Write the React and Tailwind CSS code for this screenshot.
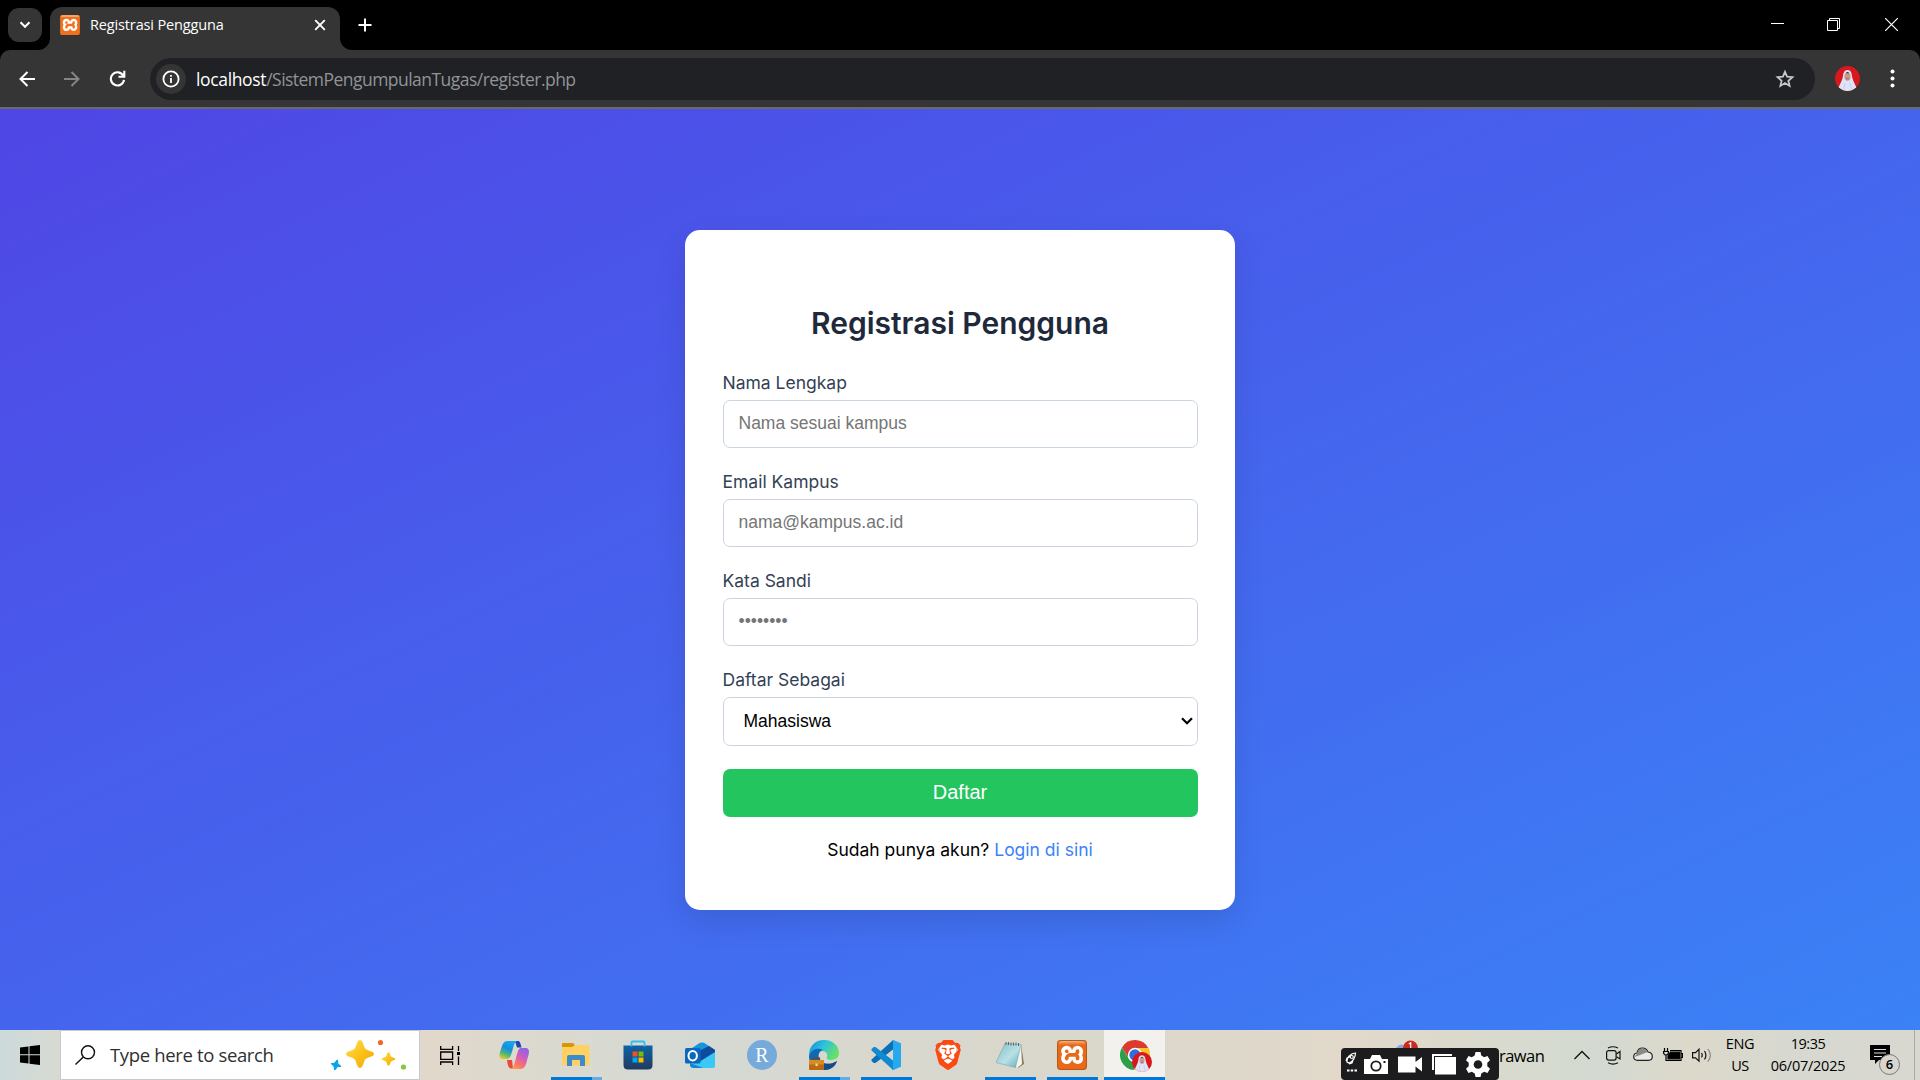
import React from "react";
import { SiBrave, SiXampp } from "react-icons/si";

const FIELD = "h-12 w-full rounded-[7px] border border-[#cbd5e1] bg-white px-[15px] text-[17.5px] leading-none placeholder:text-[#757575] placeholder:opacity-100 outline-none font-['Liberation_Sans',sans-serif]";

function Avatar({ size }) {
  return (
    <svg width={size} height={size} viewBox="0 0 25 25">
      <defs><clipPath id={"av" + size}><circle cx="12.5" cy="12.5" r="12.5" /></clipPath></defs>
      <g clipPath={`url(#av${size})`}>
        <rect width="25" height="25" fill="#d8181d" />
        <path d="M12.5 4C8.8 4 8.3 7.500 7.800 11C7.300 15 3.500 20 2.500 25H22.500C21.500 20 17.700 15 17.200 11C16.700 7.500 16.200 4 12.500 4Z" fill="#dfe3f7" />
        <ellipse cx="12.500" cy="10.600" rx="3.100" ry="4.200" fill="#c79a8c" />
        <path d="M11 6.800Q12.500 5.300 14 6.800V7.300H11Z" fill="#3a2d35" />
        <path d="M11.200 12.700H13.800" stroke="#9e5454" strokeWidth=".8" />
        <path d="M10 17L8.500 25M15 17L17 25" stroke="#b9c0df" strokeWidth=".6" />
      </g>
    </svg>
  );
}

function Xampp({ size }) {
  return (
    <span className={size > 20 ? "relative block h-[30px] w-[30px] rounded-[4px] bg-[linear-gradient(white,white)] bg-[length:80%_80%] bg-center bg-no-repeat after:absolute after:inset-0 after:rounded-[4px] after:border after:border-[#b5581c] after:bg-[linear-gradient(#f3b083,transparent_4px)]" : "relative block h-5 w-5 bg-[linear-gradient(white,white)] bg-[length:80%_80%] bg-center bg-no-repeat after:absolute after:inset-x-px after:top-0 after:h-[2px] after:rounded-t-[2px] after:bg-[#f3a36c]"}>
      <SiXampp size={size} color={size > 20 ? "#e8691a" : "#f0701d"} />
    </span>
  );
}

function BrowserChrome() {
  return (
    <header className="shrink-0 bg-black font-['Open_Sans','Noto_Sans',sans-serif]">
      <div className="flex h-[50px] items-start">
        <button className="ml-2 mt-2 grid h-[34px] w-[34px] place-items-center rounded-[11px] bg-[#353535]">
          <svg width="12" height="8" viewBox="0 0 12 8" fill="none" stroke="#fff" strokeWidth="2"><path d="M1.500 1.300L6 5.800L10.500 1.300" /></svg>
        </button>
        <div className="relative ml-2 mt-[7px] flex h-[43px] w-[290px] items-start rounded-t-[12px] bg-[#353535]">
          <svg className="absolute -left-3 bottom-0" width="12" height="12"><path d="M12 0V12H0A12 12 0 0 0 12 0Z" fill="#353535" /></svg>
          <svg className="absolute -right-3 bottom-0" width="12" height="12"><path d="M0 0V12H12A12 12 0 0 1 0 0Z" fill="#353535" /></svg>
          <span className="ml-[10px] mt-2"><Xampp size={20} /></span>
          <span className="ml-[10px] mt-[7px] w-[224px] shrink-0 text-[14.5px] leading-[22px] tracking-[-0.14px] text-white">Registrasi Pengguna</span>
          <svg className="mt-[12px] shrink-0" width="12" height="12" viewBox="0 0 12 12" stroke="#fff" strokeWidth="1.900"><path d="M1.200 1.200L10.800 10.800M10.800 1.200L1.200 10.800" /></svg>
        </div>
        <svg className="ml-[18px] mt-[18px]" width="14" height="14" viewBox="0 0 14 14" stroke="#fff" strokeWidth="2"><path d="M7 .5V13.500M.5 7H13.500" /></svg>
        <div className="ml-auto mt-[18px] flex">
          <svg className="mr-[43px]" width="13" height="13"><path d="M0 5.500H13" stroke="#fff" /></svg>
          <svg className="mr-[45px]" width="13" height="13" viewBox="0 0 13 13" fill="none" stroke="#fff"><path d="M.5 2.500H10.500V12.500H.5ZM2.500 2.500V.5H12.500V10.500H10.500" /></svg>
          <svg className="mr-[22px]" width="13" height="13" stroke="#fff" strokeWidth="1.200"><path d="M0 0L13 13M13 0L0 13" /></svg>
        </div>
      </div>
      <div className="flex h-[57px] items-start rounded-t-[10px] bg-[#353535]">
        <svg className="ml-[19px] mt-[21px]" width="16" height="16" viewBox="0 0 16 16" fill="none" stroke="#fff" strokeWidth="2"><path d="M16 8H2M8.500 1L1.500 8L8.500 15" /></svg>
        <svg className="ml-[29px] mt-[21px]" width="16" height="16" viewBox="0 0 16 16" fill="none" stroke="#858585" strokeWidth="2"><path d="M0 8H14M7.500 1L14.500 8L7.500 15" /></svg>
        <svg className="ml-[29px] mt-[20px]" width="17" height="17" viewBox="0 0 17 17" fill="none" stroke="#fff" strokeWidth="2.100"><path d="M14.300 5.800A6.600 6.600 0 1 0 15 9.800M15.300 .8V6.700H9.500" /></svg>
        <div className="ml-6 mt-2 flex h-[42px] w-[1665px] items-center rounded-full bg-[#202124]">
          <span className="ml-[6px] grid h-[30px] w-[30px] place-items-center rounded-full bg-[#353535]">
            <svg width="18" height="18" viewBox="0 0 18 18" fill="none" stroke="#fff" strokeWidth="1.800"><circle cx="9" cy="9" r="7.600" /><path d="M9 8V13M9 5V6.700" /></svg>
          </span>
          <span className="ml-[10px] text-[17.5px] tracking-[-0.53px] text-[#919497]"><span className="tracking-[-0.35px] text-white">localhost</span>/SistemPengumpulanTugas/register.php</span>
          <svg className="ml-auto mr-5" width="20" height="20" viewBox="0 0 20 20" fill="none" stroke="#c7c7c7" strokeWidth="1.800"><path d="M10 2.800L12.100 7.700L17.400 8.200L13.400 11.700L14.600 16.900L10 14.100L5.400 16.900L6.600 11.700L2.600 8.200L7.900 7.700Z" /></svg>
        </div>
        <span className="ml-5 mt-4"><Avatar size={25} /></span>
        <svg className="ml-[30px] mt-[19px]" width="5" height="19" fill="#fff"><circle cx="2.500" cy="2.500" r="2" /><circle cx="2.500" cy="9.500" r="2" /><circle cx="2.500" cy="16.500" r="2" /></svg>
      </div>
      <div className="h-[2px] bg-[#6a6a6a]" />
    </header>
  );
}

function Field({ label, children }) {
  return (
    <label className="mb-[23px] block">
      <span className="mb-1 block h-[24px] text-[17.5px] leading-[22px] text-[#334155]">{label}</span>
      {children}
    </label>
  );
}

function RegisterCard() {
  return (
    <main className="flex flex-1 items-center justify-center bg-linear-to-br/srgb from-[#4f46e5] to-[#3b82f6] font-['Inter',sans-serif]">
      <form className="h-[680px] w-[550px] rounded-[15px] bg-white pl-[37.5px] pr-[37.5px] pt-[73px] shadow-[0_12px_31px_rgba(0,0,0,0.1)]">
        <h2 className="mb-[28px] text-center text-[30px] leading-[41px] font-semibold text-[#1e293b]">Registrasi Pengguna</h2>
        <Field label="Nama Lengkap"><input className={FIELD} placeholder="Nama sesuai kampus" /></Field>
        <Field label="Email Kampus"><input className={FIELD} placeholder="nama@kampus.ac.id" /></Field>
        <Field label="Kata Sandi"><input className={FIELD} type="text" placeholder="••••••••" /></Field>
        <Field label="Daftar Sebagai">
          <span className="flex h-[49px] items-center justify-between rounded-[7px] border border-[#cbd5e1] bg-white pl-5 pr-1 font-['Liberation_Sans',sans-serif] text-[17.5px] text-black">
            Mahasiswa
            <svg width="12" height="8" viewBox="0 0 12 8" fill="none" stroke="#000" strokeWidth="2.200"><path d="M1 1.200L6 6.200L11 1.200" /></svg>
          </span>
        </Field>
        <button type="button" className="h-12 w-full rounded-[7px] bg-[#22c55e] pb-[2px] font-['Liberation_Sans',sans-serif] text-[20px] text-white">Daftar</button>
        <p className="mt-[20px] text-center text-[17.5px] leading-[26px] text-black">Sudah punya akun? <a className="text-[#3b82f6]">Login di sini</a></p>
      </form>
    </main>
  );
}

function AppCell({ children, state }) {
  return (
    <span className={state === "active" ? "ml-px flex h-[50px] w-[61px] shrink-0 flex-col items-center bg-[#f2f1ed]" : "flex h-[50px] w-[62px] shrink-0 flex-col items-center"}>
      <span className="grid h-[47px] place-items-center pt-[3px]">{children}</span>
      {state === "open" && <span className="h-[3px] w-[51px] bg-[#0078d7]" />}
      {state === "multi" && <span className="flex h-[3px] w-[51px]"><i className="w-[41px] bg-[#0078d7]" /><i className="w-[10px] bg-[#66abe3]" /></span>}
      {state === "active" && <span className="h-[3px] w-full bg-[#0078d7]" />}
    </span>
  );
}

const Star = ({ x, y, s, fill, r = 0 }) => (
  <path transform={`translate(${x} ${y}) rotate(${r}) scale(${s})`} fill={fill} d="M0-14C2.200-14 3-11 4.200-7.500C5-5 6-4.500 8.500-3.500C12-2.200 14-1.800 14 0C14 1.800 12 2.200 8.500 3.500C6 4.500 5 5 4.200 7.500C3 11 2.200 14 0 14C-2.200 14-3 11-4.200 7.500C-5 5-6 4.500-8.500 3.500C-12 2.200-14 1.800-14 0C-14-1.800-12-2.200-8.500-3.500C-6-4.500-5-5-4.200-7.500C-3-11-2.200-14 0-14Z" />
);

function Taskbar() {
  return (
    <footer className="flex h-[50px] shrink-0 overflow-hidden bg-[linear-gradient(90deg,#ccdada_0px,#d8dad2_60px,#e1d8cb_430px,#d9dad1_590px,#d4d9d3_700px,#d8d8cf_840px,#dad7cb_1100px,#e2d9ca_1350px,#d6dacf_1540px,#d3d9d1_1600px,#ddd9cb_1690px,#d7d8cf_1780px,#d8d8d0_1920px)] font-['Open_Sans','Noto_Sans',sans-serif] text-black">
      <span className="grid w-[60px] shrink-0 place-items-center">
        <svg width="20" height="20" viewBox="0 0 20 20"><path d="M0 2.500L8.500 1.400V9.300H0ZM9.500 1.200L20 0V9.300H9.500ZM0 10.300H8.500V18.600L0 17.400ZM9.500 10.300H20V20L9.500 18.700Z" /></svg>
      </span>
      <div className="flex h-[50px] w-[360px] shrink-0 items-start border border-[#c9c9c9] bg-white">
        <svg className="ml-[14px] mt-[14px] shrink-0" width="21" height="20" viewBox="0 0 21 20" fill="none" stroke="#111" strokeWidth="1.400"><circle cx="13" cy="7.300" r="6.500" /><path d="M8.300 12L.5 19.500" /></svg>
        <span className="ml-[14px] mt-[11px] w-[217px] shrink-0 whitespace-nowrap text-[18.5px] leading-[26px] tracking-[-0.35px] text-[#303030]">Type here to search</span>
        <svg width="80" height="34" viewBox="0 0 80 34" className="mt-[7px] shrink-0">
          <defs><linearGradient id="gold" x2="1" y2="1"><stop stopColor="#ffe052" /><stop offset=".55" stopColor="#fbbf16" /><stop offset="1" stopColor="#eda514" /></linearGradient></defs>
          <Star x={33} y={16} s={1} fill="url(#gold)" /><Star x={61.500} y={21} s={0.480} fill="url(#gold)" /><Star x={9} y={27} s={0.380} fill="#0ca4e8" r={15} />
          <circle cx="53.500" cy="4.500" r="2.600" fill="#f0662b" /><circle cx="76.500" cy="29" r="2.600" fill="#87c540" />
        </svg>
      </div>
      <span className="grid w-[63px] shrink-0 place-items-center pr-[3px]">
        <svg width="20" height="19" viewBox="0 0 20 19" fill="none" stroke="#000" strokeWidth="1.300"><path d="M.7 0V3.300H12.600V0M.7 19V16H12.600V19M.7 6H12.600V13.300H.7ZM18.500 0V5M18.500 10.500V19" /><path d="M17 6H20V9H17Z" fill="#000" stroke="none" /></svg>
      </span>
      <AppCell>
        <svg width="30" height="28" viewBox="0 0 30 28">
          <defs>
            <linearGradient id="c1" x1=".6" x2=".2" y2="1"><stop stopColor="#18a8ef" /><stop offset=".4" stopColor="#148ee0" /><stop offset=".7" stopColor="#4bb57a" /><stop offset="1" stopColor="#e4cf28" /></linearGradient>
            <linearGradient id="c2" x1=".7" x2=".2" y2="1"><stop stopColor="#8f62e8" /><stop offset=".45" stopColor="#d85fb1" /><stop offset=".75" stopColor="#fb7468" /><stop offset="1" stopColor="#f9a14b" /></linearGradient>
          </defs>
          <path d="M16 0H19C21 0 21.500 2.500 22.500 6.500H18Z" fill="#1846b5" />
          <path d="M9 0H18C15.500 1 15 4 13.500 9C12 14.500 11 18 8 18H3.500C0 18 0 15 1 11L3 5C4.500 1 6 0 9 0Z" fill="url(#c1)" />
          <path d="M8 19H13L14 27.500H12C9.500 27.500 8.500 23.500 8 19Z" fill="#e84b36" />
          <path d="M21 28H12C14.500 27 15 24 16.500 19C18 13.500 19 7 22 7H26.500C30 7 30.500 10 29.500 14L27 23C25.500 27 24 28 21 28Z" fill="url(#c2)" />
        </svg>
      </AppCell>
      <AppCell state="multi">
        <svg width="28" height="24" viewBox="0 0 28 24"><path d="M0 1Q0 0 1 0H11L13.500 2.500L11 5H0Z" fill="#dc9500" /><path d="M0 4H10L13 2H26Q27.500 2 27.500 3.500V21Q27.500 22.500 26 22.500H1.500Q0 22.500 0 21Z" fill="#ffd163" /><path d="M5 23V14Q5 12 7 12H21Q23 12 23 14V23H18V17H10V23Z" fill="#3c8ccb" /></svg>
      </AppCell>
      <AppCell>
        <svg width="30" height="30" viewBox="0 0 30 30"><defs><linearGradient id="st" x2="0" y2="1"><stop stopColor="#0d62a9" /><stop offset="1" stopColor="#223a5f" /></linearGradient></defs><path d="M.5 5.500H29.500V25Q29.500 29.500 25 29.500H5Q.5 29.500 .5 25Z" fill="url(#st)" /><path d="M8.500 6.500V2.500Q8.500 1.500 9.500 1.500H20.500Q21.500 1.500 21.500 2.500V6.500" fill="none" stroke="#31bdf0" strokeWidth="1.800" /><path d="M9.500 11.500H14.500V16.500H9.500Z" fill="#f25022" /><path d="M15.500 11.500H20.500V16.500H15.500Z" fill="#7fba00" /><path d="M9.500 17.500H14.500V22.500H9.500Z" fill="#00a4ef" /><path d="M15.500 17.500H20.500V22.500H15.500Z" fill="#ffb900" /></svg>
      </AppCell>
      <AppCell>
        <svg width="30" height="27" viewBox="0 0 30 27"><path d="M4 8L15 .8Q17 0 19 .8L30 8V16H4Z" fill="#1895da" /><path d="M8 12L24 4L30 8V12L15 21Z" fill="#104a9c" /><path d="M14 20L30 10V24Q30 26 28 26H9Q6 26 5 22Z" fill="#3bc8f4" /><path d="M5 21L18 26H9Q5 26 5 23Z" fill="#1683ce" /><rect y="6" width="15.500" height="15.500" rx="1.500" fill="#0868bd" /><ellipse cx="7.700" cy="13.700" rx="4.200" ry="4.700" fill="none" stroke="#fff" strokeWidth="2" /></svg>
      </AppCell>
      <AppCell>
        <span className="grid h-[30px] w-[30px] place-items-center rounded-full bg-[#75aadb] font-['Liberation_Serif',serif] text-[20px] leading-[28px] text-white">R</span>
      </AppCell>
      <AppCell state="multi">
        <svg width="30" height="30" viewBox="0 0 30 30"><defs><linearGradient id="ed" x2="1" y2=".5"><stop stopColor="#1687d9" /><stop offset=".5" stopColor="#2cc3dc" /><stop offset="1" stopColor="#67df68" /></linearGradient></defs><path d="M0 15C0 6 6.500 0 15 0C24 0 30 6 30 13C30 18 26 20 22 20C18.500 20 17 18.500 18 16.500C19 14 17 11 13 11C8 11 4 14 0 19Z" fill="url(#ed)" /><path d="M0 16C2 9 9 7 14 10C10 11 9 15 10 18C12 24 20 26 28 21C26 27 21 30 15 30C6 30 0 24 0 16Z" fill="#1268b2" /><path d="M10 18C12 24 20 26 28 21C26 27 21 30 15 30V23C12 22 10 20 10 18Z" fill="#144d86" /><rect x="0" y="20" width="15" height="10" rx="1" fill="#b86a14" /><path d="M0 20H15V24.500H0Z" fill="#d88b25" /><path d="M4.500 20V18H10.500V20" fill="none" stroke="#78400c" strokeWidth="1.200" /><rect x="6.500" y="23.500" width="2.200" height="2.600" fill="#ffd978" /></svg>
      </AppCell>
      <AppCell state="open">
        <svg width="30" height="30" viewBox="0 0 30 30"><path d="M22 0L30 3.500V26.500L22 30L20.500 28.500L22 22Z" fill="#26a5ee" /><path d="M22 0L20.500 1.500L.5 19.500V21L2.800 23L4.500 23L22 9.500Z" fill="#0a70b8" /><path d="M22 30L20.500 28.500L.5 10.500V9L2.800 7L4.500 7L22 20.500Z" fill="#128ad2" /><path d="M22 0L30 3.500V26.500L22 30Z" fill="#27a9f2" /></svg>
      </AppCell>
      <AppCell>
        <span className="block bg-[linear-gradient(white,white)] bg-[length:16px_20px] bg-center bg-no-repeat"><SiBrave size={30} color="#fb4b13" /></span>
      </AppCell>
      <AppCell state="open">
        <svg width="29" height="27" viewBox="0 0 29 27"><defs><linearGradient id="np" x2="1" y2="1"><stop stopColor="#7fbdc8" /><stop offset=".55" stopColor="#b9e1e6" /><stop offset="1" stopColor="#5aabb9" /></linearGradient></defs><path d="M25 2L28 22L22 26L19 22Z" fill="#8d7a57" /><path d="M25 2L26 22L21 26L18 22Z" fill="#f2f4f3" /><path d="M9 1.500L25 2.500L19.500 25.500L0 20.500Z" fill="url(#np)" stroke="#6c9ba5" strokeWidth=".5" /><path d="M10 0V3M12.500 0V3M15 .5V3.500M17.500 .5V3.500M20 .5V3.500M22.500 1V4" stroke="#59686b" /></svg>
      </AppCell>
      <AppCell state="open"><Xampp size={30} /></AppCell>
      <AppCell state="active">
        <span className="relative block h-[30px] w-[30px]">
          <svg width="30" height="30" viewBox="0 0 30 30"><path d="M2 7.500A15 15 0 0 1 28.500 8.500H15A7 7 0 0 0 9 18.500Z" fill="#dc3a2d" /><path d="M2 7.500L8.700 18.500A7 7 0 0 0 17 21.500L14 30A15 15 0 0 1 2 7.500Z" fill="#2e9e49" /><path d="M28.500 8A15 15 0 0 1 14 30L21 18.500Q23.500 13 18 8Z" fill="#f8c62c" /><circle cx="15" cy="15" r="7.200" fill="#fff" /><circle cx="15" cy="15" r="5.700" fill="#2e6fe0" /></svg>
          <span className="absolute left-3 top-3"><Avatar size={20} /></span>
        </span>
      </AppCell>

      <div className="relative ml-[176px] mt-[18px] flex h-8 w-[158px] shrink-0 items-start rounded-[4px] bg-[#1c1c1e]">
        <svg className="absolute left-[54px] -top-[8px]" width="24" height="8" viewBox="0 0 24 8"><path d="M1 8Q6 1 12 8Z" fill="#82a9e0" /><path d="M8 8A7.500 7.500 0 1 1 23 8Z" fill="#cb2a21" /><path d="M13.800 4L15.700 2.800V8" stroke="#fff" strokeWidth="1.200" fill="none" /></svg>
        <svg className="ml-1 mt-1" width="13" height="22" viewBox="0 0 13 22" fill="none" stroke="#fff" strokeWidth="1.200"><path d="M2 10C1 6 6 1 10.500 1C10.500 5 8 10 4 11ZM5 5L2 6L1 9M8 8L7 11L4 12" /><circle cx="6.800" cy="5" r="1.500" /><path d="M2 18.500H4.500M5.700 18.500H8.200M9.500 18.500H12" strokeWidth="2.200" /></svg>
        <svg className="ml-[6px] mt-[7px]" width="24" height="20" viewBox="0 0 24 20"><path d="M0 4H6L8 0H16L18 4H24V19H0Z" fill="#fff" /><circle cx="12" cy="11" r="4.700" fill="#fff" stroke="#1c1c1e" strokeWidth="1.800" /><path d="M19.500 6H21.500V8H19.500Z" fill="#1c1c1e" /></svg>
        <svg className="ml-[10px] mt-2" width="24" height="17" viewBox="0 0 24 17" fill="#fff"><path d="M0 .5H17.500V6L24 1V15.500L17.500 10.500V16.500H0Z" /></svg>
        <svg className="ml-[10px] mt-[6px]" width="24" height="21" viewBox="0 0 24 21" fill="#fff"><path d="M0 0H20V2H2V16H0ZM3 3H24V20.500H3Z" /></svg>
        <svg className="ml-[10px] mt-1" width="24" height="25" viewBox="0 0 24 25"><path d="M9.500 0H14.500L15.300 3.500L18.200 5.200L21.500 4L24 8.300L21.300 10.800V14.200L24 16.700L21.500 21L18.200 19.800L15.300 21.500L14.500 25H9.500L8.700 21.500L5.800 19.800L2.500 21L0 16.700L2.700 14.200V10.800L0 8.300L2.500 4L5.800 5.200L8.700 3.500Z" fill="#fff" /><circle cx="12" cy="12.500" r="4.300" fill="#1c1c1e" /></svg>
      </div>
      <span className="mt-[14px] w-[75px] shrink-0 text-[16.5px] leading-[24px] tracking-[-0.55px]">rawan</span>
      <svg className="mt-5 shrink-0" width="16" height="10" viewBox="0 0 16 10" fill="none" stroke="#111" strokeWidth="1.300"><path d="M.5 9L8 1.500L15.500 9" /></svg>
      <svg className="ml-4 mt-4 shrink-0" width="15" height="19" viewBox="0 0 15 19" fill="none" stroke="#111" strokeWidth="1.200"><rect x=".6" y="4.600" width="9.500" height="9.500" rx="2" /><path d="M10.500 8L14 5.500V13L10.500 10.700M2 2Q7 -.5 12 2M2 16.800Q7 19.300 12 16.800" /></svg>
      <svg className="ml-3 mt-[17px] shrink-0" width="20" height="14" viewBox="0 0 20 14"><path d="M4.500 13.300Q.7 13.300 .7 9.700Q.7 6.500 4 6Q5 1 9.500 1Q13.500 1 15 5Q19.300 5.500 19.300 9.500Q19.300 13.300 15.500 13.300Z" fill="#e9e9e7" stroke="#222" strokeWidth="1.200" /><path d="M1.500 10L4 6.500Q5 1.500 9.500 1.500Q13 1.500 14.500 5L8.500 7.500Z" fill="#8a8b88" /></svg>
      <svg className="ml-[10px] mt-[18px] shrink-0" width="20" height="14" viewBox="0 0 20 14" fill="none" stroke="#000" strokeWidth="1.200"><path d="M1.500 0V3M4.500 0V3M.5 3.500H5.500Q5.500 7 3 7Q.5 7 .5 3.500ZM3 7V12.500H18V2.500H7M18.500 5.500H19.500V9.500H18.500" /><path d="M7.500 4.200H16.500V10.800H5V8Z" fill="#000" /></svg>
      <svg className="ml-[9px] mt-[18px] shrink-0" width="20" height="15" viewBox="0 0 20 15" fill="none" stroke="#111" strokeWidth="1.200"><path d="M.6 4.600H3.500L7 1.200V13.200L3.500 9.800H.6ZM9.500 5Q11 7.200 9.500 9.400M12.500 3Q15.300 7.200 12.500 11.400" /><path d="M15.800 .8Q21 7.200 15.800 13.600" stroke="#8d8d88" /></svg>
      <div className="ml-[10px] mt-[3px] w-[36px] shrink-0 text-center text-[14.5px] leading-[22px] tracking-[-0.4px]"><div>ENG</div><div>US</div></div>
      <div className="ml-[7px] mt-[3px] w-[86px] shrink-0 text-center text-[14.5px] leading-[22px] tracking-[-0.25px]"><div className="tracking-[-0.5px]">19:35</div><div>06/07/2025</div></div>
      <span className="relative ml-[19px] mt-[15px] block h-8 w-[31px] shrink-0">
        <svg width="20" height="20" viewBox="0 0 20 20"><path d="M0 0H20V15H9L5 19V15H0Z" /><path d="M4 4.500H16M4 8H16M4 11.500H12" stroke="#ddd" strokeWidth="1.200" /></svg>
        <span className="absolute left-[9px] top-[9px] grid h-[21px] w-[21px] place-items-center rounded-full border border-[#777] bg-[#d7d7d0] text-[13px] font-semibold leading-none">6</span>
      </span>
      <span className="ml-auto mr-[5px] w-px shrink-0 bg-[#aaa]" />
    </footer>
  );
}

export default function App() {
  return (
    <div className="flex h-[1080px] w-[1920px] flex-col overflow-hidden">
      <BrowserChrome />
      <RegisterCard />
      <Taskbar />
    </div>
  );
}
